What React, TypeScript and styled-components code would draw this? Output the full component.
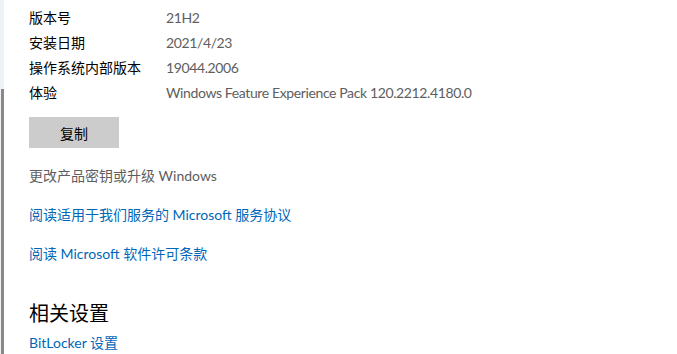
import React, { FunctionComponent } from 'react';
import styled, { createGlobalStyle } from 'styled-components';

type TInfoRow = {
  label: string;
  value: string;
};

const infoRows: Array<TInfoRow> = [
  { label: '版本号', value: '21H2' },
  { label: '安装日期', value: '2021/4/23' },
  { label: '操作系统内部版本', value: '19044.2006' },
  { label: '体验', value: 'Windows Feature Experience Pack 120.2212.4180.0' },
];

const App: FunctionComponent = () => {
  return (
    <Page>
      <GlobalStyle />
      <Rail>
        <Thumb />
      </Rail>
      <Content>
        <InfoList>
          {infoRows.map((row, idx) => (
            <InfoRow key={idx}>
              <Label>{row.label}</Label>
              <Value>{row.value}</Value>
            </InfoRow>
          ))}
        </InfoList>
        <CopyButton>复制</CopyButton>
        <MutedLine>更改产品密钥或升级 Windows</MutedLine>
        <LinkLine href="#" gap={19}>
          阅读适用于我们服务的 Microsoft 服务协议
        </LinkLine>
        <LinkLine href="#" gap={19}>
          阅读 Microsoft 软件许可条款
        </LinkLine>
        <SectionTitle>相关设置</SectionTitle>
        <LinkLine href="#" gap={6}>
          BitLocker 设置
        </LinkLine>
      </Content>
    </Page>
  );
};

const GlobalStyle = createGlobalStyle`
  html, body {
    margin: 0;
    padding: 0;
    background: #fff;
    overflow: hidden;
  }
  body {
    font-family: "Segoe UI", Lato, "Noto Sans CJK SC", sans-serif;
    font-size: 14px;
    color: #000;
  }
`;

const Page = styled.div`
  display: flex;
  height: 354px;
  overflow: hidden;
`;

const Rail = styled.div`
  flex: none;
  width: 4px;
  background: #eef1f5;
  display: flex;
  flex-direction: column;
`;

const Thumb = styled.div`
  margin: 89px 0 0 1px;
  flex: 1;
  background: #898989;
`;

const Content = styled.div`
  flex: 1;
  padding: 5px 0 0 25px;
  display: flex;
  flex-direction: column;
  align-items: flex-start;
`;

const InfoList = styled.div`
  display: flex;
  flex-direction: column;
`;

const InfoRow = styled.div`
  display: grid;
  grid-template-columns: 137px auto;
  height: 25px;
  line-height: 25px;
  white-space: nowrap;
`;

const Label = styled.span`
  color: #000;
`;

const Value = styled.span`
  color: #5e5e5e;
  letter-spacing: -0.38px;
`;

const CopyButton = styled.button`
  margin-top: 12px;
  width: 90px;
  height: 31px;
  border: none;
  background: #cccccc;
  color: #000;
  font: inherit;
  font-size: 14px;
  padding: 0;
`;

const MutedLine = styled.div`
  margin-top: 18px;
  line-height: 20px;
  color: #5e5e5e;
`;

const LinkLine = styled.a<{ gap: number }>`
  margin-top: ${({ gap }) => gap}px;
  line-height: 20px;
  color: #0067b8;
  text-decoration: none;
`;

const SectionTitle = styled.h2`
  margin: 35px 0 0;
  font-size: 20px;
  font-weight: normal;
  line-height: 28px;
  color: #000;
`;

export default App;
